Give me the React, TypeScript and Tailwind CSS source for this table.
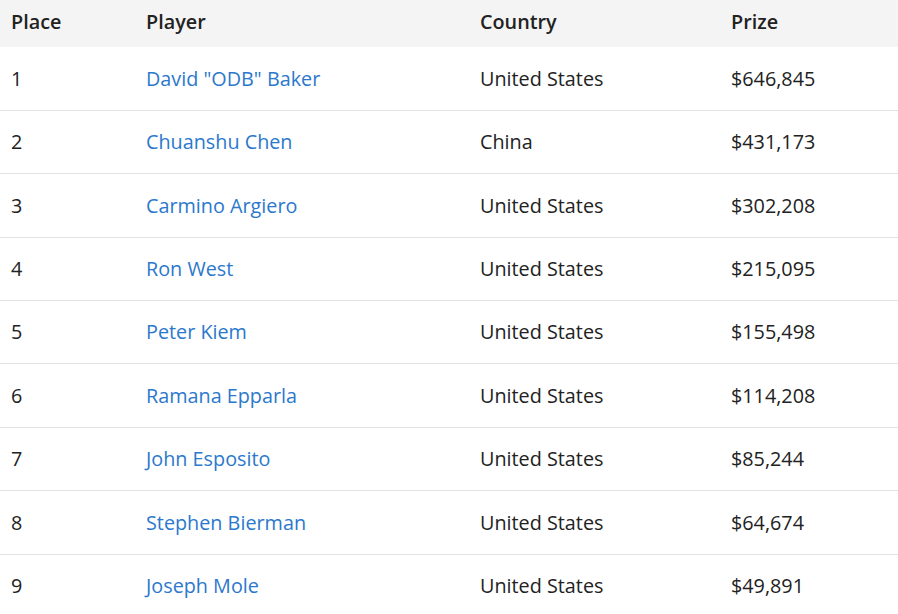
import React from "react";

const rows: [string, string, string, string][] = [
  ["1", 'David "ODB" Baker', "United States", "$646,845"],
  ["2", "Chuanshu Chen", "China", "$431,173"],
  ["3", "Carmino Argiero", "United States", "$302,208"],
  ["4", "Ron West", "United States", "$215,095"],
  ["5", "Peter Kiem", "United States", "$155,498"],
  ["6", "Ramana Epparla", "United States", "$114,208"],
  ["7", "John Esposito", "United States", "$85,244"],
  ["8", "Stephen Bierman", "United States", "$64,674"],
  ["9", "Joseph Mole", "United States", "$49,891"],
];

export default function App() {
  return (
    <div
      className="w-[898px] h-[614px] overflow-hidden bg-white text-[#222222]"
      style={{ fontFamily: '"Open Sans", sans-serif' }}
    >
      <table className="w-full border-collapse table-fixed text-[19.8px]">
        <colgroup>
          <col className="w-[146px]" />
          <col className="w-[334px]" />
          <col className="w-[251px]" />
          <col />
        </colgroup>
        <thead>
          <tr className="bg-[#f4f4f4] h-[47px]">
            <th className="text-left font-semibold pl-[11px] p-0 pb-[4px]">Place</th>
            <th className="text-left font-semibold p-0 pb-[4px]">Player</th>
            <th className="text-left font-semibold p-0 pb-[4px]">Country</th>
            <th className="text-left font-semibold p-0 pb-[4px]">Prize</th>
          </tr>
        </thead>
        <tbody>
          {rows.map((r) => (
            <tr key={r[0]} className="h-[63.4px] border-b border-[#e3e3e3]">
              <td className="pl-[11px] p-0">{r[0]}</td>
              <td className="p-0">
                <a className="text-[#2b78cc]">{r[1]}</a>
              </td>
              <td className="p-0">{r[2]}</td>
              <td className="p-0">{r[3]}</td>
            </tr>
          ))}
        </tbody>
      </table>
    </div>
  );
}
